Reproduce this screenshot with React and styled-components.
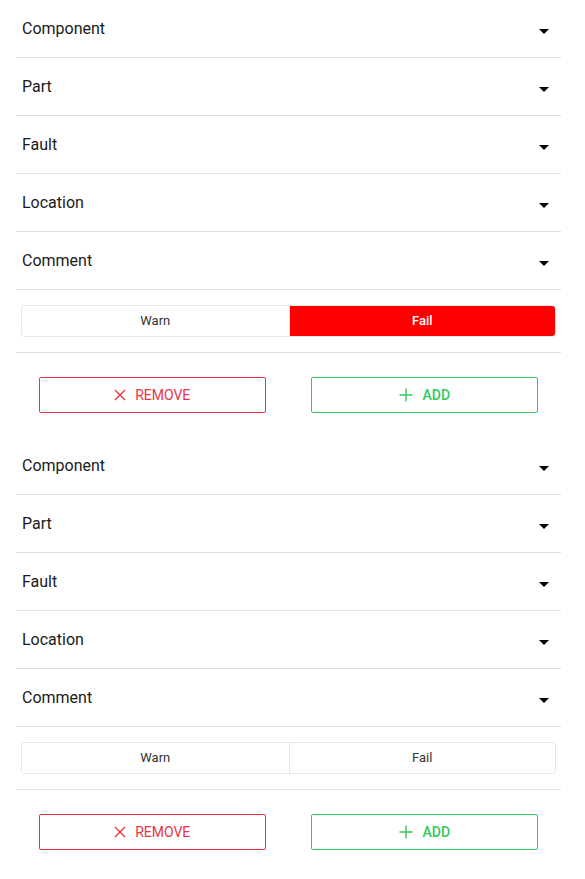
import React, { useState } from "react";
import styled, { createGlobalStyle } from "styled-components";

const Global = createGlobalStyle`
  html, body { margin: 0; padding: 0; background: #fff; }
  body { font-family: Roboto, "Liberation Sans", Arial, sans-serif; }
`;

const Page = styled.div`
  padding: 0 24px 0 16px;
`;

const Block = styled.section`
  display: flex;
  flex-direction: column;
`;

const Row = styled.div`
  height: 57px;
  border-bottom: 1px solid #e0e0e0;
  display: flex;
  align-items: center;
  justify-content: space-between;
  padding: 0 12px 0 6px;
  box-sizing: content-box;
`;

const Label = styled.span`
  font-size: 16px;
  color: #1a1a1a;
  margin-top: -1px;
`;

const Caret = styled.span`
  width: 0;
  height: 0;
  border-left: 5px solid transparent;
  border-right: 5px solid transparent;
  border-top: 5px solid #000;
  margin-top: 6px;
`;

const SegmentWrap = styled.div`
  padding: 15px 5px 15px 5px;
  border-bottom: 1px solid #e0e0e0;
`;

const Segment = styled.div`
  display: grid;
  grid-template-columns: 1fr 1fr;
  height: 32px;
  border: 1px solid #e6e6e6;
  border-radius: 4px;
  box-sizing: border-box;
  overflow: hidden;
`;

const SegButton = styled.button`
  border: none;
  border-left: ${(p) => (p.$first ? "none" : "1px solid #e6e6e6")};
  background: ${(p) => (p.$active ? "#ff0000" : "#fff")};
  color: ${(p) => (p.$active ? "#fff" : "#333")};
  font-family: Roboto, "Liberation Sans", Arial, sans-serif;
  font-size: 13px;
  font-weight: ${(p) => (p.$active ? 500 : 400)};
  padding: 0 0 1px;
  cursor: pointer;
`;

const Actions = styled.div`
  display: grid;
  grid-template-columns: 1fr 1fr;
  padding: 24px 0 24px;
  justify-items: center;
`;

const ActionButton = styled.button`
  width: 227px;
  height: 36px;
  box-sizing: border-box;
  background: #fff;
  border: 1px solid ${(p) => p.$color};
  border-radius: 2px;
  color: ${(p) => p.$color};
  font-family: Roboto, "Liberation Sans", Arial, sans-serif;
  font-size: 14px;
  font-weight: ${(p) => p.$weight};
  display: flex;
  align-items: center;
  justify-content: center;
  gap: 9px;
  cursor: pointer;
  padding: 0 0 1px;
`;

const fields = ["Component", "Part", "Fault", "Location", "Comment"];

const XIcon = () => (
  <svg width="12" height="12" viewBox="0 0 12 12" fill="none" stroke="currentColor" strokeWidth="1.4">
    <path d="M1 1L11 11M11 1L1 11" />
  </svg>
);

const PlusIcon = () => (
  <svg width="14" height="14" viewBox="0 0 14 14" fill="none" stroke="currentColor" strokeWidth="1.4">
    <path d="M7 0.5V13.5M0.5 7H13.5" />
  </svg>
);

function Entry({ initial }) {
  const [value, setValue] = useState(initial);
  return (
    <Block>
      {fields.map((f) => (
        <Row key={f}>
          <Label>{f}</Label>
          <Caret />
        </Row>
      ))}
      <SegmentWrap>
        <Segment>
          <SegButton $first $active={value === "warn"} onClick={() => setValue("warn")}>
            Warn
          </SegButton>
          <SegButton $active={value === "fail"} onClick={() => setValue("fail")}>
            Fail
          </SegButton>
        </Segment>
      </SegmentWrap>
      <Actions>
        <ActionButton $color="#e8353f" $weight={400}>
          <XIcon />
          REMOVE
        </ActionButton>
        <ActionButton $color="#34c85a" $weight={500}>
          <PlusIcon />
          ADD
        </ActionButton>
      </Actions>
    </Block>
  );
}

export default function App() {
  return (
    <>
      <Global />
      <Page>
        <Entry initial="fail" />
        <Entry initial={null} />
      </Page>
    </>
  );
}
